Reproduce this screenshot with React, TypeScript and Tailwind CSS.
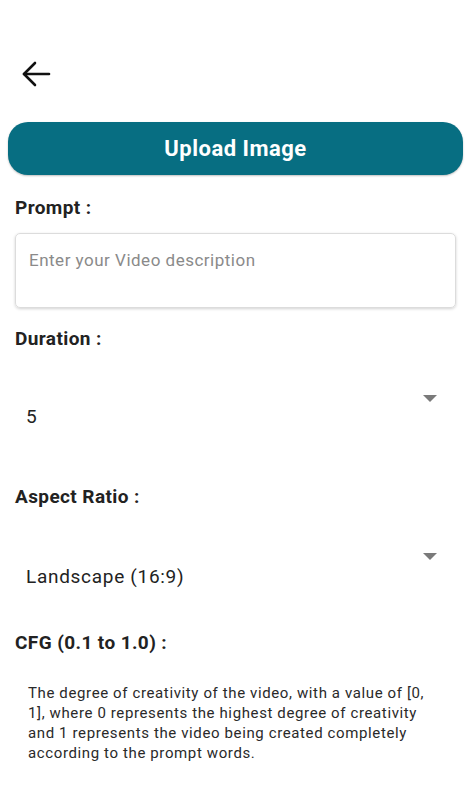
import React from 'react';

const font = { fontFamily: 'Roboto, "Liberation Sans", sans-serif' };

const Caret = () => (
  <svg width="14" height="7" viewBox="0 0 14 7" className="shrink-0">
    <path d="M0 0 L14 0 L7 7 Z" fill="#7a7a7a" />
  </svg>
);

const Label = ({ children }: { children: React.ReactNode }) => (
  <p className="text-[19px] font-bold text-[#222] leading-[20px] tracking-[0.4px] px-[15px]">{children}</p>
);

export default function App() {
  return (
    <div className="w-[474px] h-[800px] bg-white overflow-hidden" style={font}>
      <div className="pt-[60px] pl-[21px] h-[122px]">
        <svg width="30" height="28" viewBox="0 0 30 28" fill="none" stroke="#111" strokeWidth="2.6" strokeLinecap="round">
          <path d="M28 14 H3" />
          <path d="M14 3 L3 14 L14 25" strokeLinejoin="round" />
        </svg>
      </div>

      <div className="px-[8px]">
        <button className="w-[455px] h-[53px] rounded-[20px] bg-[#076e82] text-white text-[22px] tracking-[0.5px] font-bold flex items-center justify-center shadow-[0_1px_2px_rgba(0,0,0,0.25)]">
          Upload Image
        </button>
      </div>

      <div className="mt-[23px]">
        <Label>Prompt :</Label>
      </div>

      <div className="px-[15px] mt-[15px]">
        <div className="w-[441px] h-[75px] rounded-[5px] border border-[#dcdcdc] shadow-[0_1px_3px_rgba(0,0,0,0.18)] px-[13px] pt-[15px]">
          <p className="text-[17px] tracking-[0.5px] text-[#8a8a8a] leading-[22px]">Enter your Video description</p>
        </div>
      </div>

      <div className="mt-[21px]">
        <Label>Duration :</Label>
      </div>

      <div className="flex items-start justify-between pl-[26px] pr-[37px] mt-[46px]">
        <p className="text-[19px] tracking-[0.7px] text-[#222] mt-[12px] leading-[20px]">5</p>
        <Caret />
      </div>

      <div className="mt-[60px]">
        <Label>Aspect Ratio :</Label>
      </div>

      <div className="flex items-start justify-between pl-[26px] pr-[37px] mt-[46px]">
        <p className="text-[19px] tracking-[0.7px] text-[#222] mt-[14px] leading-[20px]">Landscape (16:9)</p>
        <Caret />
      </div>

      <div className="mt-[46px]">
        <Label>CFG (0.1 to 1.0) :</Label>
      </div>

      <p className="mt-[30px] pl-[28px] pr-[34px] text-[15px] tracking-[0.62px] leading-[20px] text-[#2a2a2a]">
        The degree of creativity of the video, with a value of [0, 1], where 0 represents the highest degree of creativity and 1 represents the video being created completely according to the prompt words.
      </p>
    </div>
  );
}
